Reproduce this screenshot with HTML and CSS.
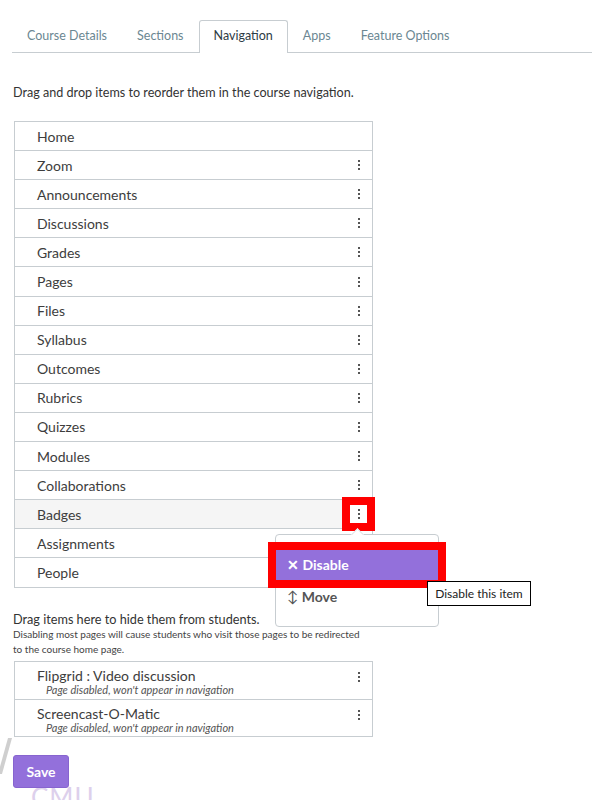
FILE: index.html
```html
<!DOCTYPE html>
<html lang="en">
<head>
  <meta charset="UTF-8">
  <title>Course Settings – Navigation</title>
  <link rel="stylesheet" href="styles.css">
</head>
<body>
  <div class="watermark">
    <svg class="wm-slash" width="14" height="36" viewBox="0 0 14 36"><path d="M10 0 L14 0 L4 36 L0 36 Z" fill="#cfcfcf"/></svg>
    <span class="wm-text">CMU</span>
  </div>

  <ul class="tabs">
    <li>Course Details</li>
    <li>Sections</li>
    <li class="active">Navigation</li>
    <li>Apps</li>
    <li>Feature Options</li>
  </ul>

  <p class="intro">Drag and drop items to reorder them in the course navigation.</p>

  <div class="nav-wrap">
    <ul class="nav-list">
      <li><span>Home</span></li>
      <li><span>Zoom</span><span class="kebab"></span></li>
      <li><span>Announcements</span><span class="kebab"></span></li>
      <li><span>Discussions</span><span class="kebab"></span></li>
      <li><span>Grades</span><span class="kebab"></span></li>
      <li><span>Pages</span><span class="kebab"></span></li>
      <li><span>Files</span><span class="kebab"></span></li>
      <li><span>Syllabus</span><span class="kebab"></span></li>
      <li><span>Outcomes</span><span class="kebab"></span></li>
      <li><span>Rubrics</span><span class="kebab"></span></li>
      <li><span>Quizzes</span><span class="kebab"></span></li>
      <li><span>Modules</span><span class="kebab"></span></li>
      <li><span>Collaborations</span><span class="kebab"></span></li>
      <li class="hover"><span>Badges</span><span class="kebab marked"></span></li>
      <li><span>Assignments</span></li>
      <li><span>People</span></li>
    </ul>

    <div class="menu">
      <div class="menu-item disable">&#10005;&nbsp;Disable</div>
      <div class="menu-item move"><span class="updown">&#8597;</span>&nbsp;Move</div>
    </div>
    <div class="tooltip">Disable this item</div>
  </div>

  <p class="hide-title">Drag items here to hide them from students.</p>
  <p class="hide-note">Disabling most pages will cause students who visit those pages to be redirected to the course home page.</p>

  <ul class="nav-list disabled-list">
    <li>
      <div>
        <div class="item-name">Flipgrid : Video discussion</div>
        <div class="item-note">Page disabled, won't appear in navigation</div>
      </div>
      <span class="kebab"></span>
    </li>
    <li>
      <div>
        <div class="item-name">Screencast-O-Matic</div>
        <div class="item-note">Page disabled, won't appear in navigation</div>
      </div>
      <span class="kebab"></span>
    </li>
  </ul>

  <button class="save">Save</button>
</body>
</html>
```

FILE: styles.css
```css
body {
  margin: 0;
  padding: 20px 13px 0 13px;
  font-family: Lato, "Open Sans", sans-serif;
  color: #333;
  background: #fff;
  position: relative;
  height: 780px;
  overflow: hidden;
}
ul {
  list-style: none;
  margin: 0;
  padding: 0;
}
p {
  margin: 0;
}

/* tabs */
.tabs {
  display: flex;
  border-bottom: 1px solid #c7cdd1;
  margin-right: -13px;
  margin-left: -1px;
  height: 32px;
}
.tabs li {
  padding: 0 14px;
  font-size: 12.5px;
  line-height: 29px;
  color: #6b8792;
  border: 1px solid transparent;
  border-bottom: none;
}
.tabs li.active {
  color: #2d3b45;
  background: #fff;
  border-color: #c7cdd1;
  border-radius: 3px 3px 0 0;
  height: 32px;
}

.intro {
  font-size: 12.6px;
  margin-top: 32px;
  line-height: 16px;
}

/* navigation list */
.nav-wrap {
  position: relative;
  margin-top: 20px;
  width: 359px;
}
.nav-list {
  border: 1px solid #c7cdd1;
  width: 357px;
  margin-left: 1px;
}
.nav-list li {
  display: flex;
  align-items: center;
  justify-content: space-between;
  height: 28.1px;
  padding: 0 5px 0 22px;
  font-size: 14px;
  color: #3d3d3d;
  border-top: 1px solid #c7cdd1;
}
.nav-list li:first-child {
  border-top: none;
  height: 28.1px;
}
.nav-list li.hover {
  background: #f5f5f5;
}
.kebab {
  width: 17px;
  height: 18px;
  background:
    radial-gradient(circle, #555 1px, transparent 1.5px) center 3px / 4px 4px no-repeat,
    radial-gradient(circle, #555 1px, transparent 1.5px) center 7px / 4px 4px no-repeat,
    radial-gradient(circle, #555 1px, transparent 1.5px) center 11px / 4px 4px no-repeat;
}
.kebab.marked {
  background-color: #fff;
  outline: 8px solid #ff0000;
}

/* popup menu */
.menu {
  position: absolute;
  left: 262px;
  top: 413px;
  width: 164px;
  height: 93px;
  background: #fff;
  border: 1px solid #c7cdd1;
  border-radius: 4px;
  padding-top: 15px;
  box-sizing: border-box;
}
.menu::before {
  content: "";
  position: absolute;
  top: -5px;
  left: 77px;
  width: 8px;
  height: 8px;
  background: #fff;
  border-left: 1px solid #e0e3e5;
  border-top: 1px solid #e0e3e5;
  transform: rotate(45deg);
}
.menu-item {
  font-size: 14px;
  font-weight: bold;
  height: 30px;
  line-height: 30px;
  padding-left: 11px;
  color: #555;
}
.menu-item.disable {
  background: #9370db;
  color: #fff;
  outline: 8px solid #ff0000;
  position: relative;
}
.menu-item.move {
  margin-top: 1px;
}
.updown {
  font-weight: normal;
  font-size: 15px;
}
.tooltip {
  position: absolute;
  left: 414px;
  top: 460px;
  width: 102px;
  height: 23px;
  border: 1px solid #000;
  background: #fff;
  font-size: 12px;
  line-height: 23px;
  text-align: center;
  color: #222;
}

/* hidden items */
.hide-title {
  font-size: 12.7px;
  margin-top: 23px;
  line-height: 16px;
}
.hide-note {
  font-size: 10px;
  line-height: 15px;
  width: 355px;
  color: #444;
}
.disabled-list {
  margin-top: 4px;
}
.disabled-list li {
  height: 36.5px;
  align-items: flex-start;
}
.disabled-list li:first-child {
  height: 37px;
}
.item-name {
  font-size: 14px;
  line-height: 16px;
  margin-top: 6px;
  color: #3d3d3d;
}
.item-note {
  font-size: 11px;
  font-style: italic;
  line-height: 12px;
  padding-left: 9px;
  color: #555;
}
.disabled-list .kebab {
  margin-top: 6px;
}

.save {
  margin-top: 18px;
  width: 56px;
  height: 33px;
  background: #9370db;
  color: #fff;
  font-family: Lato, "Open Sans", sans-serif;
  font-size: 14px;
  font-weight: bold;
  border: 1px solid #8764cf;
  border-radius: 3px;
  position: relative;
}

/* faint background logo */
.watermark {
  position: absolute;
  left: 0;
  top: 736px;
  width: 100px;
  height: 64px;
}
.wm-slash {
  position: absolute;
  left: -2px;
  top: 2px;
}
.wm-text {
  position: absolute;
  left: 31px;
  top: 46px;
  font-size: 26px;
  line-height: 30px;
  color: #ddd0ec;
  letter-spacing: 1px;
}
```
